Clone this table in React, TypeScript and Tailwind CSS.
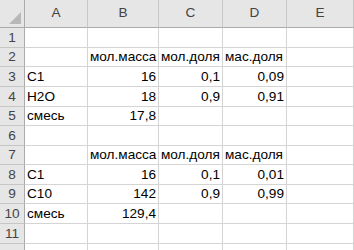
import React from "react";

const cols = ["A", "B", "C", "D", "E"];
const colW = ["w-[63px]", "w-[71px]", "w-[64px]", "w-[64px]", "w-[67px]"];
const rowH = ["h-[20px]", "h-[19px]", "h-[20px]", "h-[20px]", "h-[19px]", "h-[20px]", "h-[19px]", "h-[20px]", "h-[19px]", "h-[20px]", "h-[20px]", "h-[20px]"];

type Cell = { t: string; r?: boolean };
const data: Cell[][] = [
  [],
  [{ t: "" }, { t: "мол.масса" }, { t: "мол.доля" }, { t: "мас.доля" }],
  [{ t: "C1" }, { t: "16", r: true }, { t: "0,1", r: true }, { t: "0,09", r: true }],
  [{ t: "H2O" }, { t: "18", r: true }, { t: "0,9", r: true }, { t: "0,91", r: true }],
  [{ t: "смесь" }, { t: "17,8", r: true }],
  [],
  [{ t: "" }, { t: "мол.масса" }, { t: "мол.доля" }, { t: "мас.доля" }],
  [{ t: "C1" }, { t: "16", r: true }, { t: "0,1", r: true }, { t: "0,01", r: true }],
  [{ t: "C10" }, { t: "142", r: true }, { t: "0,9", r: true }, { t: "0,99", r: true }],
  [{ t: "смесь" }, { t: "129,4", r: true }],
  [],
  [],
];

export default function App() {
  return (
    <div
      className="w-[354px] h-[250px] overflow-hidden bg-white text-[13.6px] text-black"
      style={{ fontFamily: '"Liberation Sans", Arial, sans-serif' }}
    >
      <div className="flex h-[28px]">
        <div className="w-[25px] h-[28px] bg-[#e6e6e6] border-r border-b border-[#ababab] relative shrink-0">
          <div className="absolute right-[3px] bottom-[3px] w-0 h-0 border-l-[12px] border-l-transparent border-b-[12px] border-b-[#b8b8b8]" />
        </div>
        {cols.map((c, i) => (
          <div
            key={c}
            className={`${colW[i]} shrink-0 h-[28px] bg-[#e6e6e6] border-r border-b border-r-[#c6c6c6] border-b-[#ababab] flex items-center justify-center text-[#444]`}
          >
            {c}
          </div>
        ))}
      </div>
      {rowH.map((h, ri) => (
        <div key={ri} className={`flex ${h}`}>
          <div className="w-[25px] shrink-0 bg-[#e6e6e6] border-r border-b border-r-[#ababab] border-b-[#c6c6c6] flex items-end justify-center text-[#444] leading-[18px]">
            {ri < 11 ? ri + 1 : ""}
          </div>
          {cols.map((c, ci) => {
            const cell = data[ri]?.[ci];
            return (
              <div
                key={c}
                className={`${colW[ci]} shrink-0 border-r border-b border-[#d4d4d4] flex items-end px-[2px] leading-[18px] whitespace-nowrap overflow-visible ${cell?.r ? "justify-end" : "justify-start"}`}
              >
                {cell?.t}
              </div>
            );
          })}
        </div>
      ))}
    </div>
  );
}
